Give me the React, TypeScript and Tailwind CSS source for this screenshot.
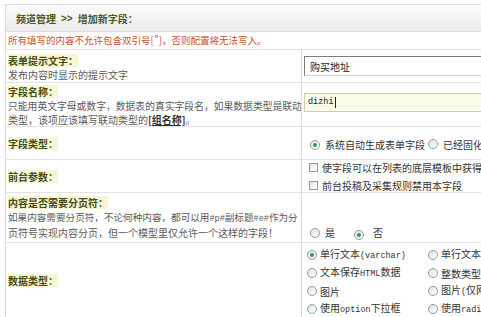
import type { ReactNode } from 'react';

const Radio = ({ checked = false }: { checked?: boolean }) => (
  <span className="inline-flex h-[10px] w-[10px] shrink-0 items-center justify-center rounded-full border border-[#8e9ba6] bg-linear-to-br from-[#dfe3e6] to-white">
    {checked && <span className="h-[4px] w-[4px] rounded-full bg-[#3c9a3c]" />}
  </span>
);

const Check = () => (
  <span className="inline-block h-[9px] w-[9px] shrink-0 border border-[#8e9ba6] bg-linear-to-br from-[#e2e5e8] to-white" />
);

// half-width latin, like SimSun's ascii
const L = ({ children }: { children: ReactNode }) => (
  <span className="font-['Liberation_Mono',monospace] text-[8.5px]">{children}</span>
);

const Label = ({ children }: { children: ReactNode }) => (
  <span className="inline-block h-[13px] bg-[#f6f6d4] font-bold leading-[13px] text-[#454c14]">{children}</span>
);

const Row = ({ h, left, right }: { h: string; left: ReactNode; right: ReactNode }) => (
  <div className={`grid grid-cols-[296px_1fr] border-b border-[#e2e2e2] ${h}`}>
    <div className="overflow-hidden border-r border-[#dcdcdc] pl-[2px]">{left}</div>
    <div className="pl-[2px]">{right}</div>
  </div>
);

const App = () => {
  const types = [
    ['单行文本', <L key="a">(varchar)</L>],
    ['单行文本', <L key="b">(text)</L>],
    ['文本保存', <L key="c">HTML</L>, '数据'],
    ['整数类型'],
    ['图片'],
    ['图片', <L key="d">(</L>, '仅网址', <L key="e">)</L>],
    ['使用', <L key="f">option</L>, '下拉框'],
    ['使用', <L key="g">radio</L>, '选项卡'],
  ];

  return (
    <div className="h-[317px] w-[481px] overflow-hidden bg-white pt-[4px] pl-[5px] font-['Noto_Sans_CJK_SC',sans-serif] text-[10px] leading-[13px] text-[#5a5a5a]">
      <div className="w-[640px] border-l border-[#dcdcdc]">
        {/* title bar */}
        <div className="flex h-[28px] items-center border-y border-[#dedede] bg-linear-to-b from-[#fbfbfb] to-[#ebebeb] pl-[10px] font-bold text-[#4b5a1c]">
          频道管理 <span className="mx-[5px] font-['Liberation_Sans',sans-serif]">&gt;&gt;</span> 增加新字段：
        </div>

        {/* notice */}
        <div className="flex h-[18px] items-center border-b border-[#e2e2e2] pl-[2px] text-[9.5px] text-[#c6522f]">
          所有填写的内容不允许包含双引号[<L>"</L>]，否则配置将无法写入。
        </div>

        <Row
          h="h-[33px]"
          left={
            <div className="pt-[4px] leading-[14px]">
              <Label>表单提示文字：</Label>
              <div>发布内容时显示的提示文字</div>
            </div>
          }
          right={
            <div className="pt-[6px]">
              <div className="flex h-[20px] w-[280px] items-center border border-t-[#7c7c7c] border-l-[#7c7c7c] border-r-[#d4d4d4] border-b-[#d4d4d4] pl-[5px] text-[#222]">
                购买地址
              </div>
            </div>
          }
        />

        <Row
          h="h-[44px]"
          left={
            <div className="whitespace-nowrap pt-[2px] leading-[14px]">
              <Label>字段名称：</Label>
              <div className="text-[9.8px]">只能用英文字母或数字，数据表的真实字段名，如果数据类型是联动</div>
              <div>
                类型，该项应该填写联动类型的<span className="font-bold text-[#333] underline">[组名称]</span>。
              </div>
            </div>
          }
          right={
            <div className="pt-[10px]">
              <div className="flex h-[19px] w-[280px] items-center border border-[#cdcdb2] bg-[#fbfbea] pl-[3px] text-[#222]">
                <L>dizhi</L>
                <span className="ml-[1px] h-[11px] w-px bg-[#222]" />
              </div>
            </div>
          }
        />

        <Row
          h="h-[33px]"
          left={
            <div className="flex h-full items-center">
              <Label>字段类型：</Label>
            </div>
          }
          right={
            <div className="flex h-full items-center whitespace-nowrap pl-[6px] pt-[3px] text-[#333]">
              <Radio checked />
              <span className="ml-[5px]">系统自动生成表单字段</span>
              <span className="ml-[3px]"><Radio /></span>
              <span className="ml-[5px]">已经固化的表单字段</span>
            </div>
          }
        />

        <Row
          h="h-[33px]"
          left={
            <div className="flex h-full items-center">
              <Label>前台参数：</Label>
            </div>
          }
          right={
            <div className="flex h-full flex-col justify-center gap-[5px] whitespace-nowrap pl-[5px] text-[#333]">
              <div className="flex items-center gap-[4px]">
                <Check />
                使字段可以在列表的底层模板中获得<L>(</L>使用此功能会增加数据库负担<L>)</L>
              </div>
              <div className="flex items-center gap-[4px]">
                <Check />
                前台投稿及采集规则禁用本字段
              </div>
            </div>
          }
        />

        <Row
          h="h-[50px]"
          left={
            <div className="whitespace-nowrap pt-[3px] leading-[14px]">
              <Label>内容是否需要分页符：</Label>
              <div className="text-[9.6px]">
                如果内容需要分页符，不论何种内容，都可以用<L>#p#</L>副标题<L>#e#</L>作为分
              </div>
              <div>页符号实现内容分页，但一个模型里仅允许一个这样的字段！</div>
            </div>
          }
          right={
            <div className="flex h-full items-center pl-[6px] pt-[30px] text-[#333]">
              <Radio />
              <span className="ml-[5px]">是</span>
              <span className="ml-[19px]"><Radio checked /></span>
              <span className="ml-[9px]">否</span>
            </div>
          }
        />

        <Row
          h="h-[76px]"
          left={
            <div className="flex h-full items-center">
              <Label>数据类型：</Label>
            </div>
          }
          right={
            <div className="grid grid-cols-[121px_1fr] pl-[3px] pt-[3px] text-[#333]">
              {types.map((t, i) => (
                <div key={i} className="flex h-[18px] items-center whitespace-nowrap">
                  <Radio checked={i === 0} />
                  <span className="ml-[3px]">{t}</span>
                </div>
              ))}
            </div>
          }
        />
      </div>
    </div>
  );
};

export default App;
